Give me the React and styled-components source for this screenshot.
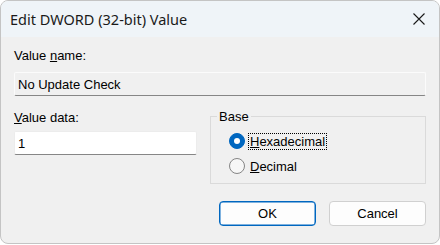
import styled, { createGlobalStyle } from "styled-components";

const GlobalStyle = createGlobalStyle`
  body {
    margin: 0;
    background: #ffffff;
  }
`;

const Window = styled.div`
  box-sizing: border-box;
  width: 440px;
  height: 244px;
  border: 1px solid #c4c4c4;
  border-radius: 8px;
  overflow: hidden;
  background: #f0f0f0;
  display: flex;
  flex-direction: column;
  font-family: "Liberation Sans", Arial, sans-serif;
  font-size: 13px;
  color: #000;
`;

const TitleBar = styled.div`
  height: 36px;
  flex: none;
  display: flex;
  align-items: center;
  justify-content: space-between;
  padding: 0 14px 0 9px;
  background: #eff4f8;
`;

const Title = styled.span`
  font-family: "Noto Sans", "Open Sans", sans-serif;
  font-size: 14.5px;
  color: #1a1a1a;
  margin-top: -1px;
`;

const CloseIcon = styled.svg`
  width: 12px;
  height: 12px;
`;

const Body = styled.div`
  flex: 1;
  padding: 11px 13px 0 13px;
  display: flex;
  flex-direction: column;
`;

const Label = styled.div`
  line-height: 15px;
  height: 15px;
  margin-bottom: ${(p) => p.gap}px;
`;

const Field = styled.div`
  box-sizing: border-box;
  height: 24px;
  width: ${(p) => (p.w ? `${p.w}px` : "auto")};
  padding: 0 3px;
  display: flex;
  align-items: center;
  background: ${(p) => (p.readOnly ? "#f0f0f0" : "#ffffff")};
  border: 1px solid ${(p) => (p.readOnly ? "#fbfbfb" : "#ececec")};
  border-bottom-color: #868686;
  border-radius: 2px;
`;

const Lower = styled.div`
  display: flex;
  justify-content: space-between;
  margin-top: 14px;
`;

const DataCol = styled.div`
  display: flex;
  flex-direction: column;
`;

const Group = styled.fieldset`
  box-sizing: border-box;
  width: 216px;
  height: 75px;
  margin: 0;
  margin-top: -1px;
  padding: 0;
  border: 1px solid #dadada;
  display: flex;
  flex-direction: column;
  gap: 9px;
`;

const Legend = styled.legend`
  margin-left: 6px;
  padding: 0 2px;
  line-height: 15px;
`;

const RadioRow = styled.div`
  display: flex;
  align-items: center;
  gap: 3px;
  padding-left: 18px;
  height: 16px;
  margin-top: ${(p) => p.top || 0}px;
`;

const RadioDot = styled.span`
  box-sizing: border-box;
  width: 16px;
  height: 16px;
  border-radius: 50%;
  flex: none;
  display: flex;
  align-items: center;
  justify-content: center;
  background: ${(p) => (p.checked ? "#0067c0" : "#f7f7f7")};
  border: 1px solid ${(p) => (p.checked ? "#0067c0" : "#858585")};
  &::after {
    content: "";
    width: 6px;
    height: 6px;
    border-radius: 50%;
    background: #ffffff;
    display: ${(p) => (p.checked ? "block" : "none")};
  }
`;

const RadioText = styled.span`
  line-height: 15px;
  padding: 0 1px;
  border: 1px dotted ${(p) => (p.focused ? "#000" : "transparent")};
`;

const Buttons = styled.div`
  display: flex;
  justify-content: flex-end;
  gap: 13px;
  margin-top: 17px;
  padding-right: 0;
`;

const Button = styled.button`
  box-sizing: border-box;
  width: 97px;
  height: 25px;
  border-radius: 4px;
  background: #fdfdfd;
  font-family: "Liberation Sans", Arial, sans-serif;
  font-size: 13px;
  color: #000;
  padding: 0;
  border: 1px solid ${(p) => (p.primary ? "#0067c0" : "#d0d0d0")};
  box-shadow: ${(p) => (p.primary ? "inset 0 0 0 0.5px #0067c0" : "none")};
`;

export default function App() {
  return (
    <>
      <GlobalStyle />
      <Window>
        <TitleBar>
          <Title>Edit DWORD (32-bit) Value</Title>
          <CloseIcon viewBox="0 0 12 12">
            <path d="M0.5 0.5 L11.5 11.5 M11.5 0.5 L0.5 11.5" stroke="#1a1a1a" strokeWidth="1.1" fill="none" />
          </CloseIcon>
        </TitleBar>
        <Body>
          <Label gap={9}>
            Value <u>n</u>ame:
          </Label>
          <Field readOnly>No Update Check</Field>
          <Lower>
            <DataCol>
              <Label gap={6}>
                <u>V</u>alue data:
              </Label>
              <Field w={183}>1</Field>
            </DataCol>
            <Group>
              <Legend>Base</Legend>
              <RadioRow top={9}>
                <RadioDot checked />
                <RadioText focused>
                  <u>H</u>exadecimal
                </RadioText>
              </RadioRow>
              <RadioRow>
                <RadioDot />
                <RadioText>
                  <u>D</u>ecimal
                </RadioText>
              </RadioRow>
            </Group>
          </Lower>
          <Buttons>
            <Button primary>OK</Button>
            <Button>Cancel</Button>
          </Buttons>
        </Body>
      </Window>
    </>
  );
}
